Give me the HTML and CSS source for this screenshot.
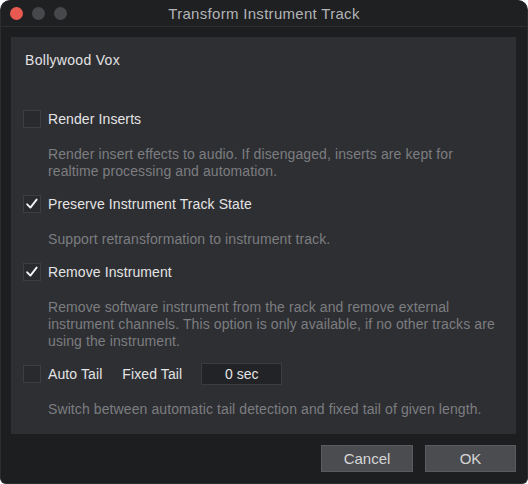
FILE: index.html
```html
<!DOCTYPE html>
<html>
<head>
<meta charset="utf-8">
<link rel="stylesheet" href="styles.css">
</head>
<body>
<div class="window">
  <div class="titlebar">
    <div class="lights">
      <span class="light red"></span>
      <span class="light"></span>
      <span class="light"></span>
    </div>
    <div class="title">Transform Instrument Track</div>
  </div>
  <div class="content">
    <div class="panel">
      <div class="header">Bollywood Vox</div>
      <div class="item first">
        <div class="row">
          <span class="check"></span>
          <span class="label">Render Inserts</span>
        </div>
        <div class="desc">Render insert effects to audio. If disengaged, inserts are kept for<br>realtime processing and automation.</div>
      </div>
      <div class="item">
        <div class="row">
          <span class="check on"><svg viewBox="0 0 18 18" width="18" height="18"><path d="M4.2 9.3 L7.4 12.6 L13.6 4.6" fill="none" stroke="#f2f2f2" stroke-width="1.9" stroke-linecap="round" stroke-linejoin="round"/></svg></span>
          <span class="label">Preserve Instrument Track State</span>
        </div>
        <div class="desc">Support retransformation to instrument track.</div>
      </div>
      <div class="item">
        <div class="row">
          <span class="check on"><svg viewBox="0 0 18 18" width="18" height="18"><path d="M4.2 9.3 L7.4 12.6 L13.6 4.6" fill="none" stroke="#f2f2f2" stroke-width="1.9" stroke-linecap="round" stroke-linejoin="round"/></svg></span>
          <span class="label">Remove Instrument</span>
        </div>
        <div class="desc">Remove software instrument from the rack and remove external<br>instrument channels. This option is only available, if no other tracks are<br>using the instrument.</div>
      </div>
      <div class="item">
        <div class="row">
          <span class="check"></span>
          <span class="label">Auto Tail</span>
          <span class="label fixed">Fixed Tail</span>
          <span class="field">0 sec</span>
        </div>
        <div class="desc">Switch between automatic tail detection and fixed tail of given length.</div>
      </div>
    </div>
    <div class="buttons">
      <button class="btn">Cancel</button>
      <button class="btn">OK</button>
    </div>
  </div>
</div>
</body>
</html>
```

FILE: styles.css
```css
html, body {
  margin: 0;
  padding: 0;
  background: #ffffff;
}
body {
  font-family: "Liberation Sans", Arial, sans-serif;
}
.window {
  width: 528px;
  height: 484px;
  box-sizing: border-box;
  background: #1d1e20;
  border-radius: 10px 10px 6px 6px;
  border: 1px solid #2c2d30;
  border-top-color: #1f2022;
  overflow: hidden;
  display: flex;
  flex-direction: column;
}
.titlebar {
  height: 25px;
  flex: none;
  background: #1f2022;
  border-bottom: 1px solid #2d2e31;
  position: relative;
  display: flex;
  align-items: center;
  justify-content: center;
}
.lights {
  position: absolute;
  left: 9px;
  top: 6px;
  display: flex;
  gap: 9px;
}
.light {
  width: 13px;
  height: 13px;
  border-radius: 50%;
  background: #47484b;
}
.light.red {
  background: #e85a51;
}
.title {
  color: #b3b4b6;
  font-size: 15px;
  letter-spacing: 0.3px;
  line-height: 25px;
}
.content {
  flex: 1;
  padding: 10px 11px 11px 10px;
  display: flex;
  flex-direction: column;
}
.panel {
  height: 397px;
  background: #2e2f33;
  padding: 15px 12px 0 12px;
  box-sizing: border-box;
}
.header {
  color: #e2e2e3;
  font-size: 14px;
  letter-spacing: 0.3px;
  line-height: 17px;
  padding-left: 2px;
}
.item {
  margin-top: 13px;
}
.item.first {
  margin-top: 39px;
}
.row {
  height: 22px;
  display: flex;
  align-items: center;
}
.check {
  width: 18px;
  height: 18px;
  box-sizing: border-box;
  background: #292a2d;
  border: 1px solid #3d3e42;
  flex: none;
  display: flex;
  align-items: center;
  justify-content: center;
  margin-right: 7px;
}
.check svg {
  display: block;
  margin: -1px;
}
.label {
  color: #e4e4e5;
  font-size: 14px;
  letter-spacing: 0.1px;
  line-height: 17px;
}
.fixed {
  margin-left: 20px;
}
.field {
  margin-left: 19px;
  width: 81px;
  height: 22px;
  box-sizing: border-box;
  background: #222326;
  border: 1px solid #3b3c40;
  color: #e4e4e5;
  font-size: 14px;
  line-height: 20px;
  text-align: center;
}
.desc {
  margin-top: 16px;
  margin-left: 25px;
  color: #7c7d80;
  font-size: 14px;
  letter-spacing: 0.1px;
  line-height: 17px;
}
.buttons {
  margin-top: 11px;
  display: flex;
  justify-content: flex-end;
  gap: 12px;
}
.btn {
  width: 92px;
  height: 27px;
  box-sizing: border-box;
  background: #4b4c50;
  border: 1px solid #5a5b5f;
  color: #d6d6d7;
  font-family: "Liberation Sans", Arial, sans-serif;
  font-size: 15px;
  padding: 0;
  margin: 0;
}
.btn + .btn {
  width: 91px;
}
```
